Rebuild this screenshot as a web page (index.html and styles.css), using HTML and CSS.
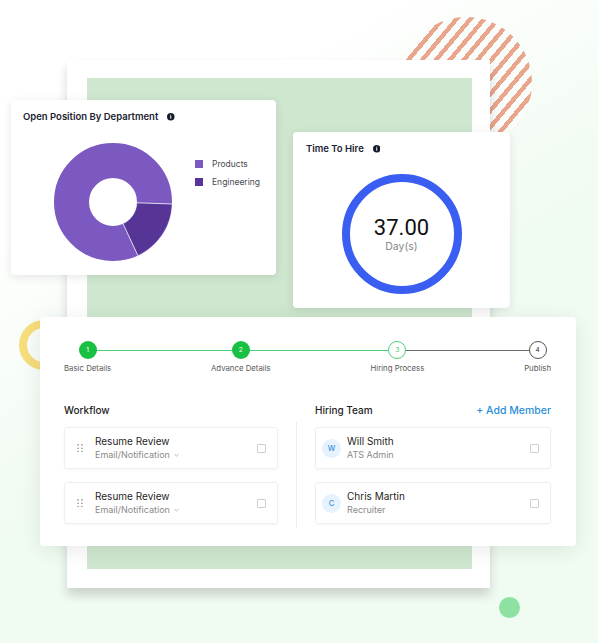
FILE: index.html
```html
<!DOCTYPE html>
<html>
<head>
<meta charset="utf-8">
<link rel="stylesheet" href="styles.css">
</head>
<body>
<div class="scene">
  <div class="stripes"></div>
  <div class="ring-yellow"></div>
  <div class="dot-green"></div>
  <div class="back-panel"><div class="back-green"></div></div>

  <section class="card card-dept">
    <h3 class="card-title">Open Position By Department
      <svg class="info" viewBox="0 0 10 10"><circle cx="5" cy="5" r="5" fill="#131a2c"/><circle cx="5" cy="2.8" r="0.75" fill="#fff"/><rect x="4.35" y="4.1" width="1.3" height="3.6" rx="0.4" fill="#fff"/></svg>
    </h3>
    <div class="dept-body">
      <svg class="donut" viewBox="0 0 120 120">
        <circle cx="60" cy="60" r="41.5" fill="none" stroke="#7b59c1" stroke-width="35"/>
        <circle cx="60" cy="60" r="41.5" fill="none" stroke="#563596" stroke-width="34" stroke-dasharray="45.6 215.2" stroke-dashoffset="-1.4"/>
        <line x1="84" y1="60.8" x2="119.5" y2="62" stroke="#fff" stroke-width="0.8"/>
        <line x1="70.1" y1="81.8" x2="84.9" y2="113.6" stroke="#fff" stroke-width="0.8"/>
      </svg>
      <ul class="legend">
        <li><span class="swatch sw-products"></span>Products</li>
        <li><span class="swatch sw-eng"></span>Engineering</li>
      </ul>
    </div>
  </section>

  <section class="card card-time">
    <h3 class="card-title">Time To Hire
      <svg class="info" viewBox="0 0 10 10"><circle cx="5" cy="5" r="5" fill="#131a2c"/><circle cx="5" cy="2.8" r="0.75" fill="#fff"/><rect x="4.35" y="4.1" width="1.3" height="3.6" rx="0.4" fill="#fff"/></svg>
    </h3>
    <div class="time-ring">
      <div class="time-value">37.00</div>
      <div class="time-unit">Day(s)</div>
    </div>
  </section>

  <section class="card card-main">
    <div class="stepper">
      <div class="track"></div>
      <div class="step done"><span class="step-dot">1</span><span class="step-label">Basic Details</span></div>
      <div class="step done"><span class="step-dot">2</span><span class="step-label">Advance Details</span></div>
      <div class="step current"><span class="step-dot">3</span><span class="step-label">Hiring Process</span></div>
      <div class="step todo"><span class="step-dot">4</span><span class="step-label">Publish</span></div>
    </div>

    <div class="columns">
      <div class="col col-left">
        <div class="col-head"><span>Workflow</span></div>
        <div class="row">
          <svg class="handle" viewBox="0 0 6 9"><circle cx="1" cy="1" r="0.9"/><circle cx="5" cy="1" r="0.9"/><circle cx="1" cy="4.5" r="0.9"/><circle cx="5" cy="4.5" r="0.9"/><circle cx="1" cy="8" r="0.9"/><circle cx="5" cy="8" r="0.9"/></svg>
          <div class="row-text">
            <div class="row-title">Resume Review</div>
            <div class="row-sub">Email/Notification <svg class="chev" viewBox="0 0 6 4"><polyline points="0.5,0.8 3,3.2 5.5,0.8"/></svg></div>
          </div>
          <span class="check"></span>
        </div>
        <div class="row">
          <svg class="handle" viewBox="0 0 6 9"><circle cx="1" cy="1" r="0.9"/><circle cx="5" cy="1" r="0.9"/><circle cx="1" cy="4.5" r="0.9"/><circle cx="5" cy="4.5" r="0.9"/><circle cx="1" cy="8" r="0.9"/><circle cx="5" cy="8" r="0.9"/></svg>
          <div class="row-text">
            <div class="row-title">Resume Review</div>
            <div class="row-sub">Email/Notification <svg class="chev" viewBox="0 0 6 4"><polyline points="0.5,0.8 3,3.2 5.5,0.8"/></svg></div>
          </div>
          <span class="check"></span>
        </div>
      </div>

      <div class="divider"></div>

      <div class="col col-right">
        <div class="col-head"><span>Hiring Team</span><span class="add">+ Add Member</span></div>
        <div class="row row-member">
          <span class="avatar">W</span>
          <div class="row-text">
            <div class="row-title">Will Smith</div>
            <div class="row-sub">ATS Admin</div>
          </div>
          <span class="check"></span>
        </div>
        <div class="row row-member">
          <span class="avatar">C</span>
          <div class="row-text">
            <div class="row-title">Chris Martin</div>
            <div class="row-sub">Recruiter</div>
          </div>
          <span class="check"></span>
        </div>
      </div>
    </div>
  </section>
</div>
</body>
</html>
```

FILE: styles.css
```css
* { box-sizing: border-box; }
html, body { margin: 0; padding: 0; }
body {
  width: 598px;
  height: 643px;
  overflow: hidden;
  font-family: "Inter", "Open Sans", sans-serif;
  color: #1f2430;
}
.scene {
  position: relative;
  width: 598px;
  height: 643px;
  background: linear-gradient(150deg, #ffffff 0%, #ffffff 22%, #f0fbf1 55%, #f0fbf1 100%);
}

/* decorations */
.stripes {
  position: absolute;
  left: 400px;
  top: 17px;
  width: 132px;
  height: 132px;
  border-radius: 50%;
  background: repeating-linear-gradient(130deg, #eaa68c 0 4.4px, #fafdfa 4.4px 10.6px);
}
.ring-yellow {
  position: absolute;
  left: 19px;
  top: 320px;
  width: 50px;
  height: 50px;
  border-radius: 50%;
  border: 8px solid #f6de7c;
}
.dot-green {
  position: absolute;
  left: 499px;
  top: 597px;
  width: 21px;
  height: 21px;
  border-radius: 50%;
  background: #8ee2a1;
}
.back-panel {
  position: absolute;
  left: 67px;
  top: 60px;
  width: 423px;
  height: 528px;
  background: #ffffff;
  padding: 18px 18px 19px 20px;
  box-shadow: 0 7px 10px rgba(0, 0, 0, 0.16);
}
.back-green {
  width: 100%;
  height: 100%;
  background: #cfe7cf;
}

/* cards */
.card {
  position: absolute;
  background: #ffffff;
  border-radius: 4px;
  box-shadow: 0 2px 10px rgba(0, 0, 0, 0.10);
}
.card-title {
  margin: 0;
  display: flex;
  align-items: center;
  gap: 9px;
  font-size: 9.5px;
  line-height: 12px;
  font-weight: 600;
  color: #1b2232;
}
.info { width: 7.5px; height: 7.5px; }

.card-dept {
  left: 11px;
  top: 100px;
  width: 265px;
  height: 175px;
  padding: 11px 12px;
}
.dept-body {
  display: flex;
  align-items: flex-start;
  margin-top: 19px;
  margin-left: 30px;
}
.donut { width: 120px; height: 120px; display: block; }
.legend {
  list-style: none;
  margin: 17px 0 0 22px;
  padding: 0;
}
.legend li {
  display: flex;
  align-items: center;
  gap: 9px;
  font-size: 8.5px;
  line-height: 10px;
  color: #4a4a52;
  margin-bottom: 8px;
}
.swatch { width: 8px; height: 8px; display: inline-block; }
.sw-products { background: #7b59c1; }
.sw-eng { background: #563596; }

.card-time {
  left: 293px;
  top: 132px;
  width: 217px;
  height: 176px;
  padding: 11px 13px;
}
.time-ring {
  width: 120px;
  height: 120px;
  margin: 19px auto 0;
  border-radius: 50%;
  border: 8px solid #3a5df2;
  display: flex;
  flex-direction: column;
  align-items: center;
  justify-content: center;
  padding-top: 2px;
}
.time-value {
  font-family: "Roboto", "Liberation Sans", sans-serif;
  font-size: 22px;
  line-height: 24px;
  color: #111;
}
.time-unit {
  font-size: 10.5px;
  line-height: 14px;
  color: #888;
}

/* main card */
.card-main {
  left: 40px;
  top: 317px;
  width: 536px;
  height: 229px;
  padding: 24px 25px 22px 24px;
  box-shadow: 0 4px 22px rgba(0, 0, 0, 0.09);
}
.stepper {
  position: relative;
  display: flex;
  justify-content: space-between;
}
.track {
  position: absolute;
  top: 9px;
  left: 22px;
  right: 15px;
  height: 1px;
  background: linear-gradient(to right, #4dcf76 0%, #4dcf76 70%, #6a6a6a 70%, #6a6a6a 100%);
}
.step {
  position: relative;
  display: flex;
  flex-direction: column;
  align-items: center;
}
.step-dot {
  width: 18px;
  height: 18px;
  border-radius: 50%;
  display: flex;
  align-items: center;
  justify-content: center;
  font-size: 6.5px;
  background: #fff;
}
.step.done .step-dot { background: #19c143; color: #fff; }
.step.current .step-dot { border: 1px solid #4fcf78; color: #3fbf68; }
.step.todo .step-dot { border: 1px solid #555; color: #333; }
.step-label {
  margin-top: 4px;
  font-size: 7.8px;
  line-height: 10px;
  color: #5a5a5a;
  white-space: nowrap;
}

.columns {
  display: flex;
  margin-top: 30px;
}
.col-left { width: 214px; }
.col-right { flex: 1; }
.divider {
  width: 1px;
  height: 106px;
  margin: 19px 18px 0 18px;
  background: #eeeeee;
}
.col-head {
  display: flex;
  justify-content: space-between;
  align-items: center;
  height: 14px;
  margin-bottom: 10px;
  font-size: 10px;
  font-weight: 500;
  color: #1e1e24;
}
.add { color: #2c8fd8; font-size: 10.5px; }
.row {
  height: 42px;
  border: 1px solid #efefef;
  border-radius: 3px;
  box-shadow: 0 1px 3px rgba(0, 0, 0, 0.04);
  display: flex;
  align-items: center;
  padding: 0 11px 0 12px;
  margin-bottom: 13px;
}
.row:last-child { margin-bottom: 0; }
.handle { width: 6px; height: 8.5px; fill: #9a9a9a; margin-right: 12px; }
.row-text { flex: 1; }
.row-title {
  font-size: 10px;
  line-height: 13px;
  color: #1e1e24;
}
.row-sub {
  font-size: 9px;
  line-height: 13px;
  color: #8a8a8a;
  display: flex;
  align-items: center;
  gap: 4px;
}
.chev { width: 5px; height: 4px; fill: none; stroke: #999; stroke-width: 0.8; }
.check {
  width: 9px;
  height: 9px;
  border: 1px solid #cfcfcf;
  border-radius: 1px;
}
.row-member { padding-left: 6px; padding-right: 11px; }
.avatar {
  width: 19px;
  height: 19px;
  border-radius: 50%;
  background: #e6f2fd;
  color: #3c8fd7;
  font-size: 7.5px;
  font-weight: 500;
  display: flex;
  align-items: center;
  justify-content: center;
  margin-right: 6px;
}
```
